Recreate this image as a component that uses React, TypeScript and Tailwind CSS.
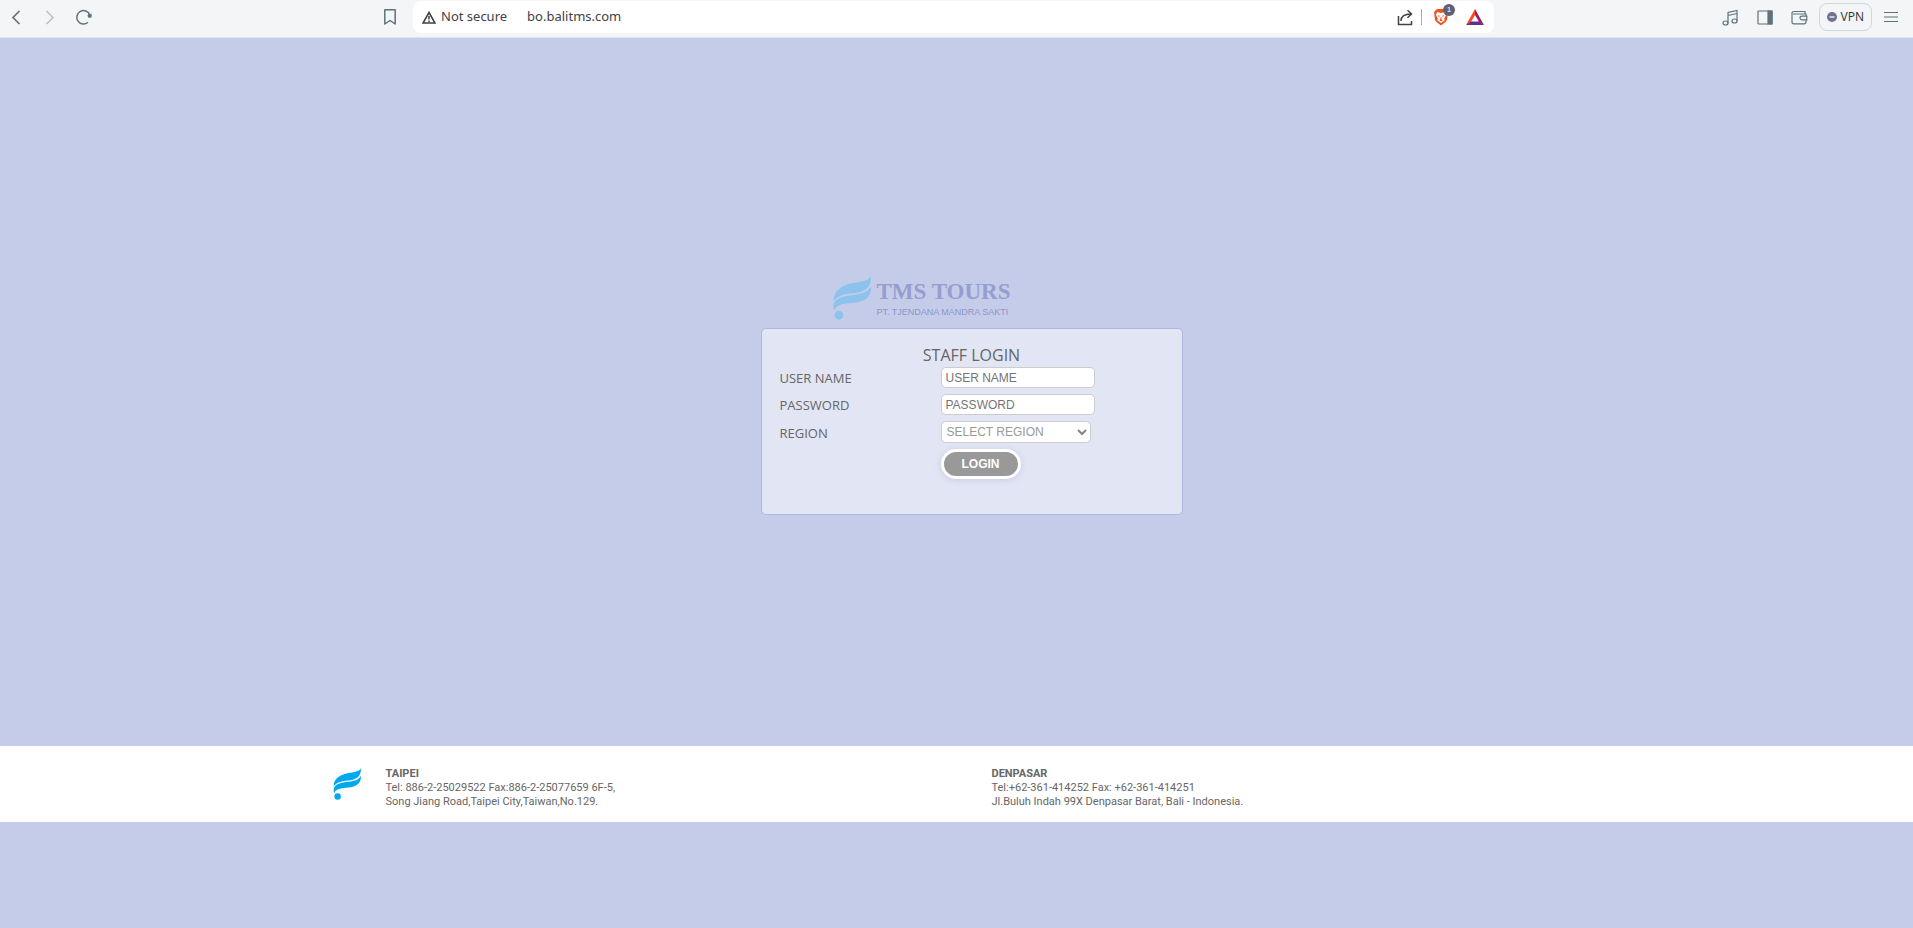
import React from "react";

function LeafLogo({ className }: { className: string }) {
  return (
    <svg viewBox="0 0 114 130" className={className} fill="currentColor" aria-hidden="true">
      <path d="M112 0C106 15 82 17 58 21C24 28 0 44 1 76C10 60 28 55 50 52C84 49 113 42 112 0Z" />
      <path d="M112 31C102 49 82 53 60 56C32 59 10 65 2 80Q-1 92 3 103C8 86 26 82 52 80C84 77 113 70 112 31Z" />
      <ellipse cx="17" cy="116" rx="13" ry="13" />
    </svg>
  );
}

function BrowserBar() {
  const line = { fill: "none", stroke: "currentColor", strokeWidth: 1.2 };
  return (
    <header className="flex h-[38px] items-start border-b border-[#dfe3ee] bg-[#f3f5f7] text-[#5f737c]">
      <div className="flex h-[34px] w-[381px] items-center pl-2">
        <button aria-label="Back" className="mr-[18px]">
          <svg width="16" height="18" viewBox="0 0 16 18" {...line} strokeWidth="1.7"><path d="M11.5 3L5 9.500L11.500 16" /></svg>
        </button>
        <button aria-label="Forward" className="mr-[17px] text-[#b9c4cc]">
          <svg width="16" height="18" viewBox="0 0 16 18" {...line} strokeWidth="1.7"><path d="M4.500 3L11 9.500L4.500 16" /></svg>
        </button>
        <button aria-label="Reload">
          <svg width="18" height="18" viewBox="0 0 18 18" {...line} strokeWidth="1.500">
            <path d="M13 14.300A6.700 6.700 0 1 1 14.800 7" />
            <circle cx="14.500" cy="7.700" r="1.900" fill="currentColor" stroke="none" />
            <path d="M16.500 5.500V9.500H13Z" fill="currentColor" stroke="none" />
          </svg>
        </button>
      </div>
      <div className="flex flex-1 pt-px">
        <button aria-label="Bookmark" className="mr-[14px] flex h-[32px] w-[18px] items-center pl-[2px]">
          <svg width="14" height="18" viewBox="0 0 14 18" {...line} strokeWidth="1.500"><path d="M1.800 1.800H12.200V16L7 12.500L1.800 16Z" strokeLinejoin="round" /></svg>
        </button>
        <div className="flex h-[32px] flex-1 items-center rounded-lg bg-white pr-[10px] pl-[9px] text-[13px] text-[#3f4145]">
          <svg width="14" height="13" viewBox="0 0 14 13" {...line}>
            <path d="M7 1.500L13 12H1Z" strokeWidth="1.600" />
            <path d="M7 5V8.500M7 9.500V11" strokeWidth="1.500" />
          </svg>
          <span className="ml-[5px] font-['Noto_Sans',sans-serif]">Not secure</span>
          <span className="ml-[20px] flex-1 font-['Noto_Sans',sans-serif]">bo.balitms.com</span>
          <button aria-label="Share">
            <svg width="17" height="17" viewBox="0 0 17 17" {...line} strokeWidth="1.500">
              <path d="M1.500 7V15.500H14.500V12M4 12C4 7 7 5 14 5M10.500 1.300L14.500 5L10.500 8.700" />
            </svg>
          </button>
          <span className="mr-[8px] ml-[7px] h-4 w-px bg-[#a9adb3]" />
          <button aria-label="Shields, 1 blocked" className="relative mr-[17px] ml-[3px]">
            <svg width="16" height="18" viewBox="0 0 16 18">
              <path d="M4 1H12L15 4L14 12Q13 14 8 17.500Q3 14 2 12L1 4Z" fill="#f4511e" />
              <path d="M4 4L8 5L12 4L13 7L11 11L12 12L8 15L4 12L5 11L3 7Z" fill="#fff" />
              <path d="M4.500 7L7 8L6 9ZM11.500 7L9 8L10 9ZM7.500 9H8.500V11L9.500 12.500L8 13.300L6.500 12.500L7.500 11Z" fill="#f4511e" />
            </svg>
            <span className="absolute -top-[4px] left-[10px] flex size-3 items-center justify-center rounded-full bg-[#5e6175] font-['Liberation_Sans',sans-serif] text-[8px] text-white">1</span>
          </button>
          <button aria-label="Rewards">
            <svg width="18" height="16" viewBox="0 0 18 16">
              <path d="M9 0L0 16L5 13L9 6Z" fill="#ff4724" />
              <path d="M9 0L18 16L13 13L9 6Z" fill="#9e1f63" />
              <path d="M0 16H18L13 12.500H5Z" fill="#662d91" />
            </svg>
          </button>
        </div>
      </div>
      <div className="flex h-[34px] w-[419px] items-center justify-end pr-[15px]">
        <button aria-label="Music" className="mr-[18px]">
          <svg width="17" height="17" viewBox="0 0 17 17" {...line}>
            <ellipse cx="3.500" cy="14" rx="2.500" ry="2" /><ellipse cx="12.500" cy="12" rx="2.500" ry="2" />
            <path d="M6 14V3.500L15 1.500V12M6 6.500L15 4.500" />
          </svg>
        </button>
        <button aria-label="Sidebar" className="mr-[18px]">
          <svg width="16" height="15" viewBox="0 0 16 15" {...line}><rect x="1" y="1" width="14" height="13" rx="0.500" /><path d="M11 1H15V14H11Z" fill="currentColor" /></svg>
        </button>
        <button aria-label="Wallet" className="mr-[11px]">
          <svg width="17" height="15" viewBox="0 0 17 15" {...line}>
            <path d="M14 4V1.500H3Q1 1.500 1 3V12Q1 13.800 3 13.800H13Q15 13.800 15 12V4H2" />
            <path d="M15.800 6.200H11Q9 6.200 9 8T11 9.900H15.800Z" fill="#f3f5f7" />
          </svg>
        </button>
        <button className="mr-[12px] flex h-[28px] items-center gap-1 rounded-lg border border-[#cdd8df] px-[7px] font-['Open_Sans',sans-serif] text-xs text-[#303136]">
          <svg width="10" height="10" viewBox="0 0 10 10"><circle cx="5" cy="5" r="5" fill="#6f7192" /><path d="M2.500 5H7.500" stroke="#e4e6f0" strokeWidth="1.500" /></svg>
          VPN
        </button>
        <button aria-label="Menu">
          <svg width="14" height="12" viewBox="0 0 14 12" {...line}><path d="M0 1.500H14M0 6H14M0 10.500H14" /></svg>
        </button>
      </div>
    </header>
  );
}

function LoginForm() {
  const field =
    "rounded-[5px] border border-[#cccccc] bg-white font-['Liberation_Sans',sans-serif] text-[12px]";
  return (
    <form
      onSubmit={(e) => e.preventDefault()}
      className="h-[187px] w-[422px] rounded-[5px] border border-[#b1b6dc] bg-[#e1e5f4] px-[18px] pt-[16px] text-[13px]"
    >
      <h1 className="pb-px text-center text-base leading-[21px]">STAFF LOGIN</h1>
      <div className="grid grid-cols-[161px_1fr] items-center gap-y-[6px]">
        <label htmlFor="user" className="pt-[2px] leading-[19px]">USER NAME</label>
        <input id="user" placeholder="USER NAME" className={`${field} h-[21px] w-[154px] px-1 placeholder:text-[#757575]`} />
        <label htmlFor="pass" className="pt-[2px] leading-[19px]">PASSWORD</label>
        <input id="pass" type="password" placeholder="PASSWORD" className={`${field} h-[21px] w-[154px] px-1 placeholder:text-[#757575]`} />
        <label htmlFor="region" className="pt-[2px] leading-[19px]">REGION</label>
        <div className="relative w-[150px]">
          <select id="region" className={`${field} block h-[22px] w-full appearance-none px-[5px] text-[#999999]`}>
            <option>SELECT REGION</option>
          </select>
          <svg width="10" height="7" viewBox="0 0 10 7" className="pointer-events-none absolute top-[8px] right-[4px]" fill="none" stroke="#858585" strokeWidth="2"><path d="M1 1L5 5L9 1" /></svg>
        </div>
        <button className="col-start-2 h-[30px] w-[80px] rounded-full border-3 border-white bg-[#999999] font-['Liberation_Sans',sans-serif] text-[12px] font-bold text-white shadow-[0_1px_6px_#c5cae3]">
          LOGIN
        </button>
      </div>
    </form>
  );
}

export default function App() {
  return (
    <div className="flex min-h-screen flex-col bg-[#c5cce9] font-['Open_Sans',sans-serif] text-[#666666]">
      <BrowserBar />
      <main className="flex h-[708px] flex-col items-center pt-[238px] pl-[30px]">
        <div className="w-[422px]">
          <div className="flex h-[52px] items-start pl-[72px]">
            <LeafLogo className="h-[44px] w-[39px] text-[#8bc3ec]" />
            <div className="flex flex-col pt-[2px] pl-[5px] text-[#969dd0]">
              <span className="font-['Liberation_Serif',serif] text-[23px] leading-[28px] font-bold">TMS TOURS</span>
              <span className="font-['Liberation_Sans',sans-serif] text-[9px] leading-[12px] text-[#8d94cb]">PT. TJENDANA MANDRA SAKTI</span>
            </div>
          </div>
          <LoginForm />
        </div>
      </main>
      <footer className="h-[76px] bg-white font-['Roboto',sans-serif] text-[11px] leading-[14px]">
        <div className="mx-auto flex max-w-[1248px] pt-[21px]">
          <LeafLogo className="mt-px mr-[24px] h-[32px] w-[29px] text-[#00a9ee]" />
          <address className="w-[606px] not-italic">
            <strong>TAIPEI</strong>
            <p>Tel: 886-2-25029522 Fax:886-2-25077659 6F-5,</p>
            <p>Song Jiang Road,Taipei City,Taiwan,No.129.</p>
          </address>
          <address className="not-italic">
            <strong>DENPASAR</strong>
            <p>Tel:+62-361-414252 Fax: +62-361-414251</p>
            <p>Jl.Buluh Indah 99X Denpasar Barat, Bali - Indonesia.</p>
          </address>
        </div>
      </footer>
    </div>
  );
}
